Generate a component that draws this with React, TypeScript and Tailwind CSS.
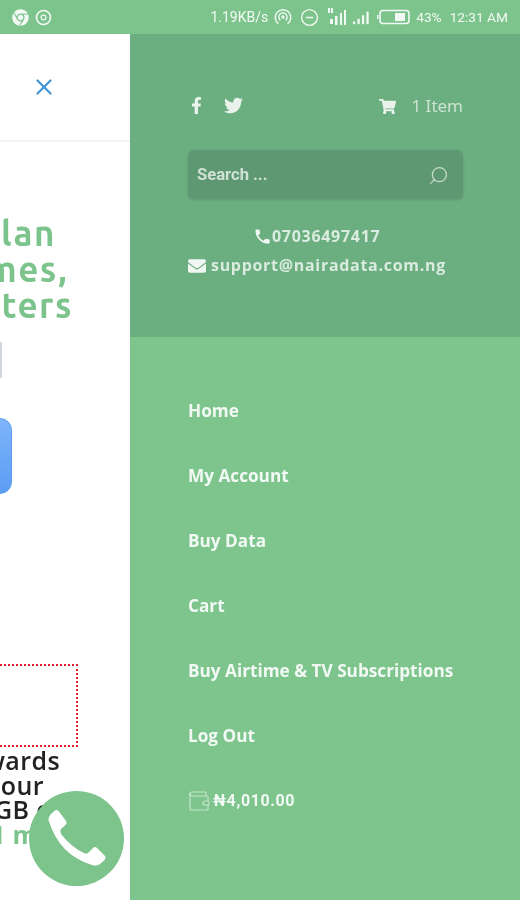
import { Search, Wallet, X, CircleMinus } from 'lucide-react';
import { FaChrome, FaEnvelope, FaFacebookF, FaShoppingCart, FaTwitter } from 'react-icons/fa';
import { MdPhone } from 'react-icons/md';

const menuItems = ['Home', 'My Account', 'Buy Data', 'Cart', 'Buy Airtime & TV Subscriptions', 'Log Out'];

function StatusBar() {
  return (
    <div className="h-[34px] shrink-0 bg-[#7cc48c] flex items-center justify-between pl-3 pr-[12px] text-white/90 font-['Roboto',sans-serif] text-[13.7px]">
      <div className="flex items-center gap-[6px]">
        <FaChrome size={17} />
        <svg width="17" height="17" viewBox="0 0 17 17" fill="none" stroke="currentColor">
          <circle cx="8.5" cy="8.5" r="7" strokeWidth="1.6" />
          <circle cx="8.5" cy="8.5" r="2.4" strokeWidth="1.2" />
        </svg>
      </div>
      <div className="flex items-center">
        <span className="mr-[6px] text-[14px]">1.19KB/s</span>
        <svg className="mr-[8px]" width="18" height="20" viewBox="0 0 20 20" fill="none" stroke="currentColor" strokeWidth="1.5">
          <path d="M5 17.5a8.6 8.6 0 1 1 10 0" />
          <path d="M7 13.5a4.6 4.6 0 1 1 6 0" />
          <circle cx="10" cy="10" r="1.2" />
        </svg>
        <CircleMinus className="mr-[9px]" size={19} strokeWidth={1.7} />
        <svg className="mr-[6px]" width="19" height="20" viewBox="0 0 19 20" fill="currentColor">
          <rect x="0" y="1" width="2" height="5" />
          <rect x="3" y="1" width="2" height="5" />
          <rect x="2" y="12" width="3" height="5" />
          <rect x="7" y="9" width="2.5" height="9" />
          <rect x="12" y="6" width="2" height="12" />
          <rect x="16" y="3" width="2" height="15" />
        </svg>
        <svg className="mr-[7px]" width="17" height="20" viewBox="0 0 19 20" fill="currentColor">
          <rect x="0" y="15" width="2.5" height="3" />
          <rect x="5" y="12" width="2.5" height="6" />
          <rect x="10" y="8" width="2.5" height="10" />
          <rect x="15" y="4" width="2.5" height="14" />
        </svg>
        <svg className="mr-[6px]" width="33" height="16" viewBox="0 0 33 16" fill="none" stroke="currentColor">
          <rect x="0" y="6" width="1.5" height="4" fill="currentColor" stroke="none" />
          <rect x="3" y="1.5" width="29" height="13" rx="3" strokeWidth="1.6" />
          <rect x="18" y="4" width="10" height="8" fill="currentColor" stroke="none" />
        </svg>
        <span className="mr-[8px]">43%</span>
        <span>12:31 AM</span>
      </div>
    </div>
  );
}

function PageLine({ text, className }: { text: string; className: string }) {
  return <div className={`flex whitespace-nowrap ${className}`}>{text}</div>;
}

function BehindPage() {
  return (
    <div className="w-[130px] shrink-0 bg-white flex flex-col overflow-hidden">
      <div className="h-[108px] shrink-0 border-b-2 border-gray-100 flex items-center justify-end pr-[73px]">
        <X className="text-[#3f94d8]" size={26} strokeWidth={2} />
      </div>
      <div className="mt-[73px] font-['Ubuntu','Open_Sans',sans-serif] font-bold text-[35px] leading-[36px] tracking-[1.5px] text-[#7cc48c]">
        <PageLine text="lan" className="justify-end pr-[74px]" />
        <PageLine text="mes," className="justify-end pr-[62px]" />
        <PageLine text="ters" className="justify-end pr-[57px]" />
      </div>
      <div className="mt-[19px] w-[2px] h-[36px] bg-gray-300" />
      <div className="mt-[40px] -ml-[60px] w-[72px] h-[76px] shrink-0 rounded-xl border border-[#5b9cec] bg-gradient-to-b from-[#7db4fb] to-[#5c9cf3]" />
      <div className="mt-[170px] -ml-[4px] w-[82px] h-[83px] shrink-0 border-[2px] border-dotted border-[#e02030]" />
      <div className="mt-[1px] font-['Open_Sans',sans-serif] font-semibold text-[25px] leading-[24.6px] tracking-[0.4px] text-[#222]">
        <PageLine text="wards" className="justify-end pr-[70px]" />
        <PageLine text="our" className="justify-end pr-[86px]" />
        <PageLine text="GB of" className="-ml-[6px]" />
        <PageLine text="1 m" className="-ml-[9px] font-bold text-[#7cc48c]" />
      </div>
    </div>
  );
}

function SideMenu() {
  return (
    <div className="flex-1 flex flex-col min-w-0 text-white">
      <div className="h-[303px] shrink-0 bg-[#6bae7f] pt-[59px] pl-[58px] pr-[57px]">
        <div className="h-[24px] flex items-center justify-between">
          <div className="flex items-center gap-[19px] text-white/85">
            <FaFacebookF size={17} />
            <FaTwitter size={19} />
          </div>
          <div className="flex items-center text-white/65 font-['Noto_Sans',sans-serif] text-[17px] pt-[2px]">
            <FaShoppingCart className="mr-[15px] text-white/85" size={17} />
            <span>1 Item</span>
          </div>
        </div>
        <div className="mt-[33px] h-[49px] rounded-md bg-[#5e9872] flex items-center justify-between pl-[9px] pr-[14px] pt-[1px] shadow-sm">
          <span className="font-['Roboto',sans-serif] font-bold text-[16.6px] text-white/70">Search ...</span>
          <Search className="-scale-x-100 text-white/65" size={21} strokeWidth={1.4} />
        </div>
        <div className="mt-[23px] flex flex-col font-['Open_Sans',sans-serif] font-bold text-[16px] leading-[29px] text-white/75">
          <div className="flex items-center pl-[65px]">
            <MdPhone className="text-white/90" size={19} />
            <span className="tracking-[0.7px]">07036497417</span>
          </div>
          <div className="flex items-center">
            <FaEnvelope className="mr-[5px] text-white/90" size={18} />
            <span className="tracking-[0.7px]">support@nairadata.com.ng</span>
          </div>
        </div>
      </div>
      <nav className="flex-1 bg-[#7dc58d] pl-[58px] pt-[41px] font-['Open_Sans',sans-serif] font-bold text-[17.2px] text-white/90">
        {menuItems.map((item) => (
          <div key={item} className="h-[65px] flex items-center">{item}</div>
        ))}
        <div className="h-[65px] flex items-center pt-[1px]">
          <Wallet className="-ml-[1px] mr-[2px] text-white/55" size={24} strokeWidth={1.2} />
          <span className="font-['Roboto',sans-serif] text-[16px] tracking-[0.6px]">₦4,010.00</span>
        </div>
      </nav>
    </div>
  );
}

export default function App() {
  return (
    <div className="relative w-[520px] h-[900px] overflow-hidden flex flex-col bg-white blur-[0.4px]">
      <StatusBar />
      <div className="flex-1 flex min-h-0">
        <BehindPage />
        <SideMenu />
      </div>
      {/* floating call button */}
      <div className="absolute left-[29px] top-[791px] w-[95px] h-[95px] rounded-full bg-[#7cc48c]">
        <svg className="text-white" width="95" height="95" viewBox="0 0 95 95" fill="currentColor">
          <path d="M19.5 29 Q19 26 22 23 L26 19.5 Q28 18 30 20.5 L37 30 Q38.5 32 36.5 34 L32 38 Q30.5 40 32 43 Q42 56 55 62 Q57.5 63.5 59.5 61.5 L64 57 Q66 55 68 57 L76 65 Q77.5 67 75.5 69 L71 73 Q68 75.5 63 74 Q30 64 19.5 29 Z" />
        </svg>
      </div>
    </div>
  );
}
